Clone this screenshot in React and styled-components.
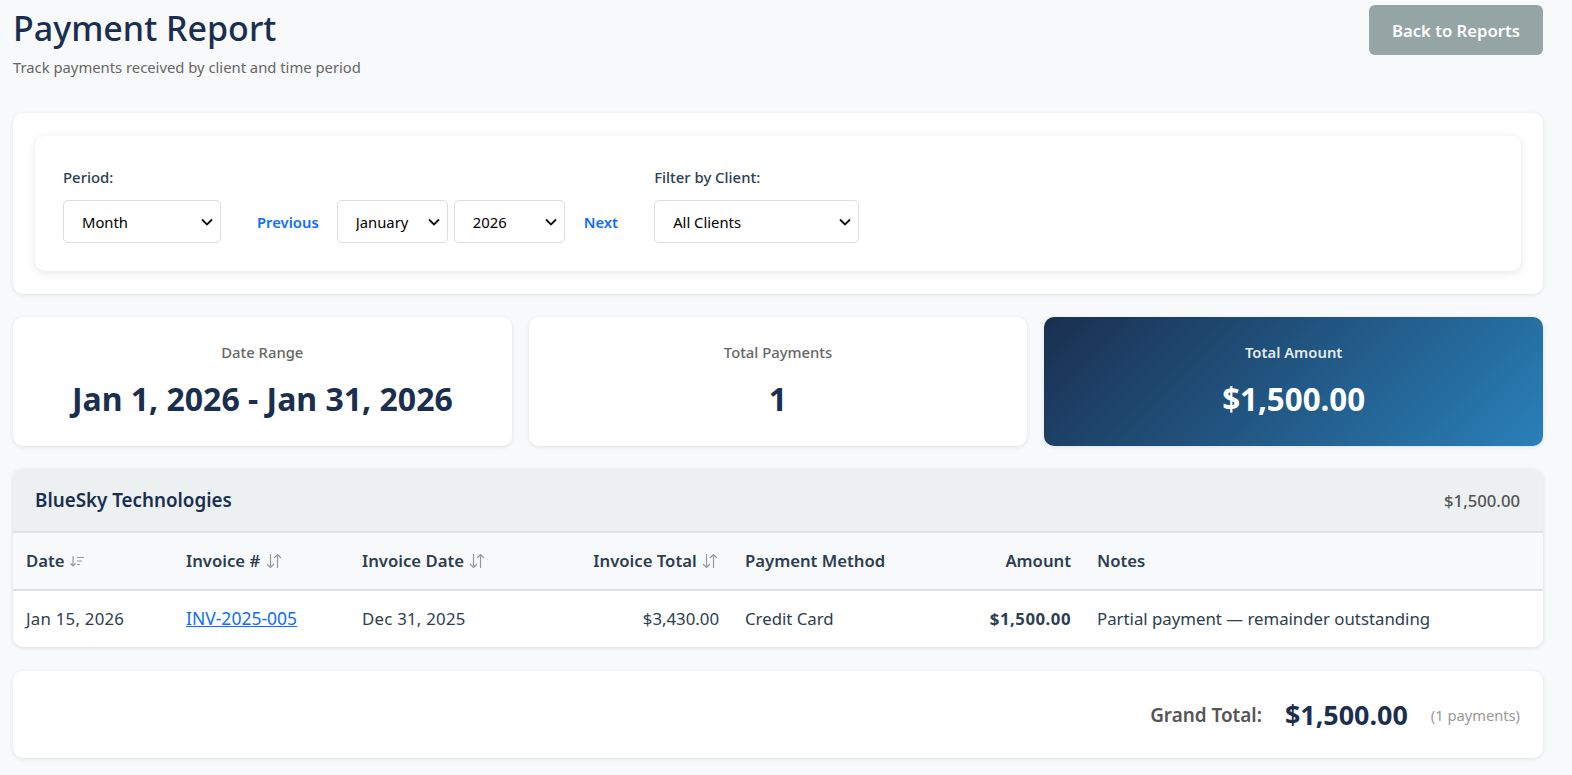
import React from "react"
import styled, { createGlobalStyle } from "styled-components"

const chevron =
  "url(\"data:image/svg+xml,%3Csvg xmlns='http://www.w3.org/2000/svg' width='12' height='8' viewBox='0 0 12 8'%3E%3Cpath d='M1 1.5l5 5 5-5' fill='none' stroke='%23111' stroke-width='1.8'/%3E%3C/svg%3E\")"

const GlobalStyle = createGlobalStyle`
  * { box-sizing: border-box; }
  body {
    margin: 0;
    background: #f8f9fa;
    font-family: "Noto Sans", "Open Sans", sans-serif;
    color: #2c3e50;
  }
`

const SortIcon = ({ active }) =>
  active ? (
    <SortSvg width="16" height="16" viewBox="0 0 16 16">
      <path d="M4 2v10M1.5 9.5L4 12l2.5-2.5M8 3.5h7M8 7h5M8 10.5h3" />
    </SortSvg>
  ) : (
    <SortSvg width="18" height="18" viewBox="0 0 18 18">
      <path d="M5.5 2v13.5M2 12l3.5 3.5L9 12M12.5 16V2.5M9 6l3.5-3.5L16 6" />
    </SortSvg>
  )

const App = () => {
  return (
    <Page>
      <GlobalStyle />
      <Header>
        <div>
          <Title>Payment Report</Title>
          <Subtitle>Track payments received by client and time period</Subtitle>
        </div>
        <BackButton>Back to Reports</BackButton>
      </Header>

      <Card>
        <FilterPanel>
          <FilterGroup>
            <FilterLabel>Period:</FilterLabel>
            <Select $width={158} defaultValue="Month">
              <option>Month</option>
              <option>Quarter</option>
              <option>Year</option>
            </Select>
          </FilterGroup>
          <PeriodNav>
            <NavLink>Previous</NavLink>
            <Select $width={111} defaultValue="January">
              <option>January</option>
            </Select>
            <Select $width={111} defaultValue="2026">
              <option>2026</option>
            </Select>
            <NavLink>Next</NavLink>
          </PeriodNav>
          <FilterGroup>
            <FilterLabel>Filter by Client:</FilterLabel>
            <Select $width={205} defaultValue="All Clients">
              <option>All Clients</option>
            </Select>
          </FilterGroup>
        </FilterPanel>
      </Card>

      <Stats>
        <StatCard>
          <StatLabel>Date Range</StatLabel>
          <StatValue>Jan 1, 2026 - Jan 31, 2026</StatValue>
        </StatCard>
        <StatCard>
          <StatLabel>Total Payments</StatLabel>
          <StatValue>1</StatValue>
        </StatCard>
        <StatCard $highlight>
          <StatLabel $highlight>Total Amount</StatLabel>
          <StatValue $highlight>$1,500.00</StatValue>
        </StatCard>
      </Stats>

      <ClientSection>
        <ClientHeader>
          <ClientName>BlueSky Technologies</ClientName>
          <ClientTotal>$1,500.00</ClientTotal>
        </ClientHeader>
        <Table>
          <colgroup>
            <col width="160" />
            <col width="176" />
            <col width="205" />
            <col width="178" />
            <col width="200" />
            <col width="152" />
            <col />
          </colgroup>
          <thead>
            <tr>
              <Th>Date <SortIcon active /></Th>
              <Th>Invoice # <SortIcon /></Th>
              <Th>Invoice Date <SortIcon /></Th>
              <Th $right>Invoice Total <SortIcon /></Th>
              <Th>Payment Method</Th>
              <Th $right>Amount</Th>
              <Th>Notes</Th>
            </tr>
          </thead>
          <tbody>
            <tr>
              <Td $spaced>Jan 15, 2026</Td>
              <Td><InvoiceLink href="#">INV-2025-005</InvoiceLink></Td>
              <Td $spaced>Dec 31, 2025</Td>
              <Td $right>$3,430.00</Td>
              <Td>Credit Card</Td>
              <Td $right $bold>$1,500.00</Td>
              <Td>Partial payment — remainder outstanding</Td>
            </tr>
          </tbody>
        </Table>
      </ClientSection>

      <GrandTotal>
        <GrandLabel>Grand Total:</GrandLabel>
        <GrandValue>$1,500.00</GrandValue>
        <GrandCount>(1 payments)</GrandCount>
      </GrandTotal>
    </Page>
  )
}

export default App

const Page = styled.div`
  padding: 0 29px 19px 13px;
`

const Header = styled.header`
  display: flex;
  justify-content: space-between;
  align-items: flex-start;
  height: 113px;
  padding-top: 5px;
`

const Title = styled.h1`
  margin: 0;
  font-size: 34px;
  line-height: 46px;
  font-weight: 500;
  color: #1a2f4f;
`

const Subtitle = styled.p`
  margin: 6px 0 0;
  font-size: 14.8px;
  line-height: 20px;
  color: #666;
`

const BackButton = styled.button`
  width: 174px;
  height: 50px;
  border: 0;
  border-radius: 6px;
  background: #95a5a6;
  color: #fff;
  font: 600 16.7px "Noto Sans", sans-serif;
`

const Card = styled.section`
  background: #fff;
  border-radius: 10px;
  padding: 23px 22px;
  box-shadow: 0 1px 4px rgba(0, 0, 0, 0.1);
  margin-bottom: 23px;
`

const FilterPanel = styled.div`
  display: flex;
  align-items: flex-end;
  height: 135px;
  padding: 0 28px 28px;
  background: #fff;
  border-radius: 10px;
  box-shadow: 0 2px 10px rgba(0, 0, 0, 0.1);
`

const FilterGroup = styled.div`
  display: flex;
  flex-direction: column;
  gap: 13px;
`

const FilterLabel = styled.label`
  font-size: 14.9px;
  line-height: 20px;
  font-weight: 500;
  color: #2c3e50;
`

const Select = styled.select`
  appearance: none;
  width: ${(p) => p.$width}px;
  height: 43px;
  padding: 0 18px;
  border: 1px solid #ddd;
  border-radius: 5px;
  background: #fff ${chevron} no-repeat right 7px center;
  color: #000;
  font: 400 14.8px "Noto Sans", sans-serif;
`

const PeriodNav = styled.div`
  display: flex;
  align-items: center;
  gap: 6px;
  margin: 0 36px;
`

const NavLink = styled.a`
  margin: 0 13px;
  color: #0d6efd;
  font-size: 14.8px;
  font-weight: 600;
  cursor: pointer;
  &:first-child { margin-left: 0; margin-right: 12px; }
  &:last-child { margin-right: 0; }
`

const Stats = styled.div`
  display: grid;
  grid-template-columns: repeat(3, 1fr);
  gap: 17px;
  margin-bottom: 23px;
`

const StatCard = styled.div`
  height: 129px;
  display: flex;
  flex-direction: column;
  align-items: center;
  padding-top: 25px;
  border-radius: 10px;
  background: ${(p) =>
    p.$highlight ? "linear-gradient(135deg, #1a2f4f 0%, #2980b9 100%)" : "#fff"};
  box-shadow: 0 1px 4px rgba(0, 0, 0, 0.1);
`

const StatLabel = styled.div`
  font-size: 14.8px;
  line-height: 20px;
  font-weight: ${(p) => (p.$highlight ? 600 : 500)};
  color: ${(p) => (p.$highlight ? "rgba(255, 255, 255, 0.9)" : "#666")};
`

const StatValue = styled.div`
  margin-top: 16px;
  font-size: ${(p) => (p.$highlight ? "31.3px" : "32px")};
  line-height: 42px;
  font-weight: 700;
  color: ${(p) => (p.$highlight ? "#fff" : "#1a2f4f")};
`

const ClientSection = styled.section`
  background: #fff;
  border-radius: 10px;
  overflow: hidden;
  box-shadow: 0 1px 4px rgba(0, 0, 0, 0.12);
  margin-bottom: 24px;
`

const ClientHeader = styled.div`
  display: flex;
  justify-content: space-between;
  align-items: center;
  height: 64px;
  padding: 0 23px 0 22px;
  background: #ecf0f1;
  border-bottom: 2px solid #dee2e6;
`

const ClientName = styled.h3`
  margin: 0;
  font-size: 18.8px;
  font-weight: 600;
  color: #1a2f4f;
`

const ClientTotal = styled.span`
  font-size: 16.7px;
  font-weight: 500;
  color: #555;
`

const Table = styled.table`
  width: 100%;
  border-collapse: collapse;
  table-layout: fixed;
`

const Th = styled.th`
  height: 57px;
  padding: 0 13px 2px;
  background: #f8f9fa;
  border-bottom: 2px solid #dee2e6;
  text-align: ${(p) => (p.$right ? "right" : "left")};
  font-size: 16.7px;
  font-weight: 600;
  color: #2c3e50;
  white-space: nowrap;
`

const SortSvg = styled.svg`
  vertical-align: -3px;
  fill: none;
  stroke: #999;
  stroke-width: 1.2;
`

const Td = styled.td`
  height: 57px;
  padding: 0 13px 2px;
  text-align: ${(p) => (p.$right ? "right" : "left")};
  font-size: 16.8px;
  font-weight: ${(p) => (p.$bold ? 700 : 400)};
  letter-spacing: ${(p) => (p.$bold ? "0.5px" : p.$spaced ? "0.25px" : "0")};
  color: #2c3e50;
  white-space: nowrap;
`

const InvoiceLink = styled.a`
  color: #0d6efd;
  font-size: 17.5px;
  text-decoration: underline;
`

const GrandTotal = styled.section`
  display: flex;
  justify-content: flex-end;
  align-items: center;
  gap: 23px;
  height: 87px;
  padding: 0 23px;
  background: #fff;
  border-radius: 10px;
  box-shadow: 0 1px 4px rgba(0, 0, 0, 0.1);
`

const GrandLabel = styled.span`
  font-size: 18.9px;
  font-weight: 600;
  color: #555;
`

const GrandValue = styled.span`
  font-size: 26.9px;
  font-weight: 700;
  color: #1a2f4f;
`

const GrandCount = styled.span`
  font-size: 14.7px;
  color: #999;
`
